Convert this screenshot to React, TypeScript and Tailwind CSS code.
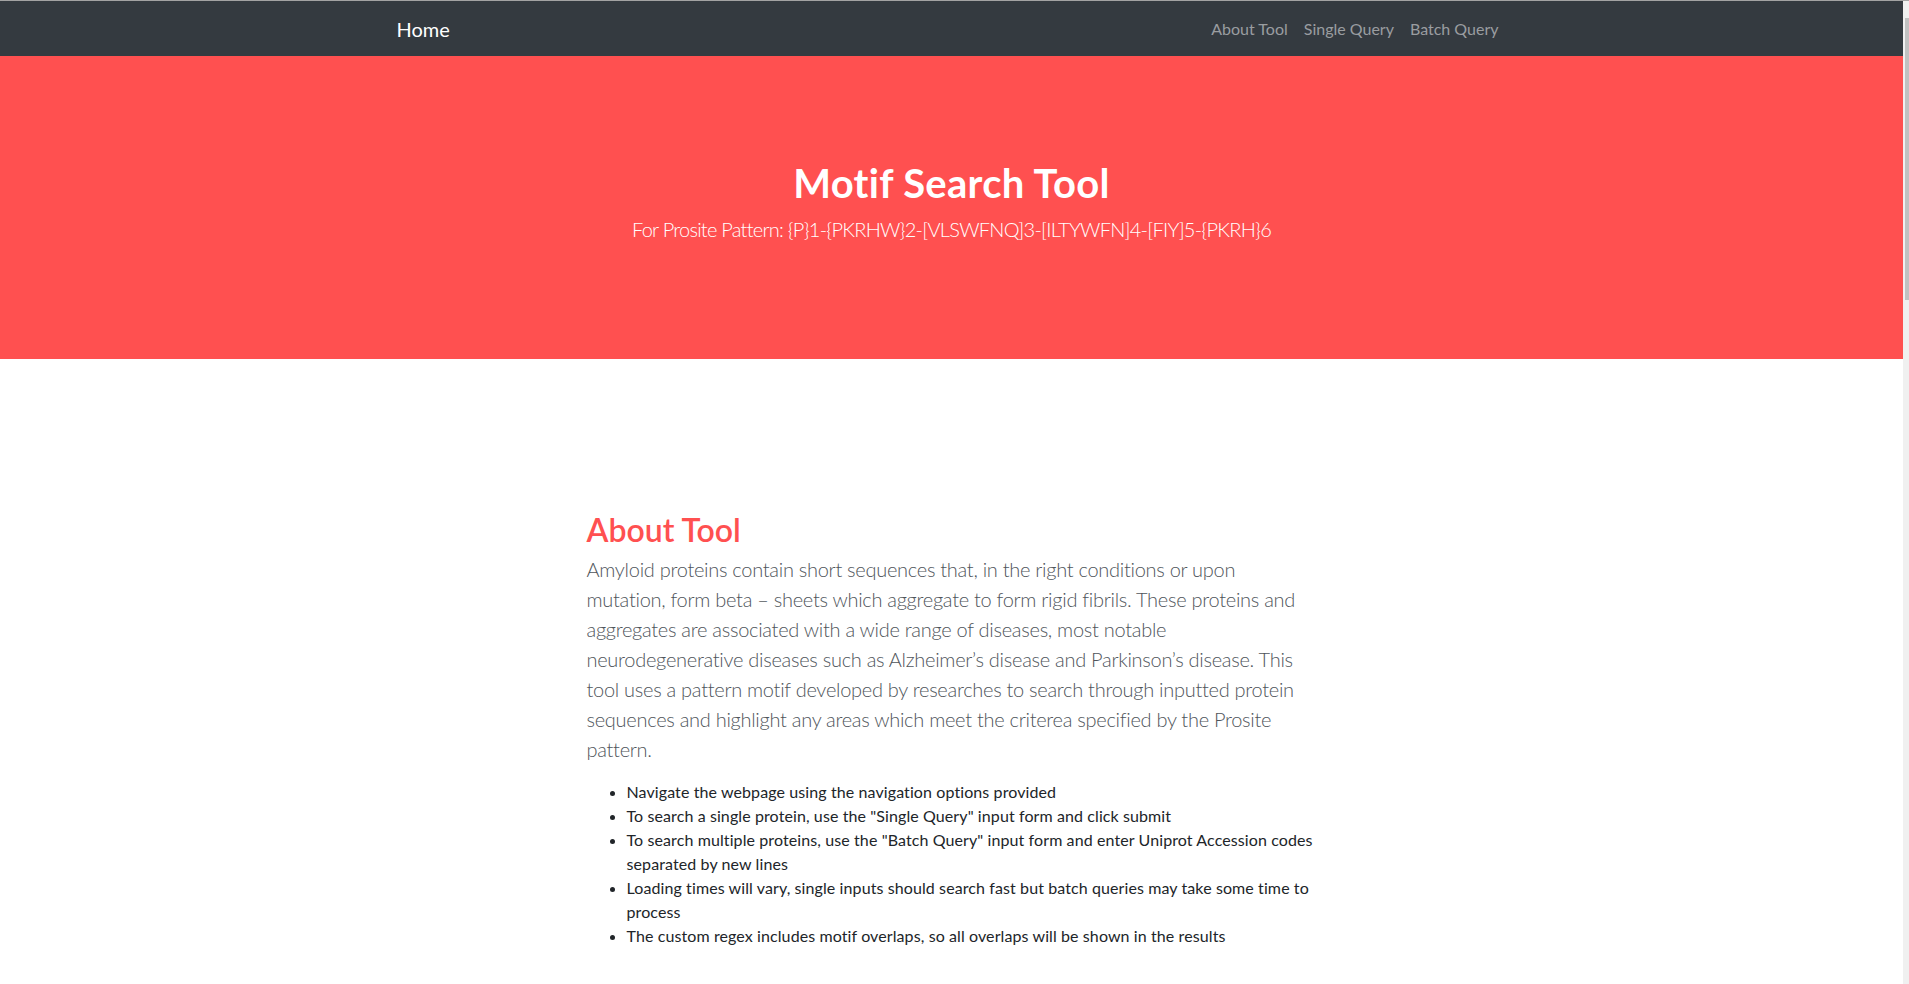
const navLinks = ["About Tool", "Single Query", "Batch Query"];

const tips = [
  "Navigate the webpage using the navigation options provided",
  'To search a single protein, use the "Single Query" input form and click submit',
  'To search multiple proteins, use the "Batch Query" input form and enter Uniprot Accession codes separated by new lines',
  "Loading times will vary, single inputs should search fast but batch queries may take some time to process",
  "The custom regex includes motif overlaps, so all overlaps will be shown in the results",
];

export default function App() {
  return (
    <div className="flex h-screen w-full overflow-hidden border-t border-[#a3a3a3] bg-white font-['Segoe_UI',Lato,'Liberation_Sans',sans-serif]">
      <div className="flex-1 min-w-0">
        {/* Navbar */}
        <nav className="h-[55px] bg-[#343a40]">
          <div className="mx-auto flex h-full w-[1140px] items-center justify-between px-[15px]">
            <a className="text-[20px] leading-[30px] text-white">Home</a>
            <ul className="flex">
              {navLinks.map((l) => (
                <li key={l}>
                  <a className="px-2 text-[16px] text-[#9a9da0]">{l}</a>
                </li>
              ))}
            </ul>
          </div>
        </nav>

        {/* Hero */}
        <header className="h-[303px] bg-[#ff5050] pt-[103px] text-center text-white">
          <h1 className="text-[40px] font-bold leading-[48px] tracking-[0.3px]">Motif Search Tool</h1>
          <p className="mt-[7px] text-[20px] font-light leading-[30px] tracking-[-0.75px]">
            For Prosite Pattern: {"{P}"}1-{"{PKRHW}"}2-[VLSWFNQ]3-[ILTYWFN]4-[FIY]5-{"{PKRH}"}6
          </p>
        </header>

        {/* About */}
        <section className="pt-[152px]">
          <div className="mx-auto w-[730px]">
            <h2 className="mb-[5px] text-[32px] font-semibold leading-[38px] text-[#ff5050]">About Tool</h2>
            <p className="mb-4 text-[20px] font-light leading-[30px] tracking-[-0.28px] text-[#4f555b]">
              Amyloid proteins contain short sequences that, in the right conditions or upon mutation,
              form beta – sheets which aggregate to form rigid fibrils. These proteins and aggregates are
              associated with a wide range of diseases, most notable neurodegenerative diseases such as
              Alzheimer’s disease and Parkinson’s disease. This tool uses a pattern motif developed by
              researches to search through inputted protein sequences and highlight any areas which meet
              the criterea specified by the Prosite pattern.
            </p>
            <ul className="list-disc pl-10 text-[16px] leading-6 tracking-[0.1px] text-[#212529]">
              {tips.map((t) => (
                <li key={t}>{t}</li>
              ))}
            </ul>
          </div>
        </section>
      </div>

      {/* Scrollbar */}
      <div className="flex w-[6px] shrink-0 flex-col bg-[#f0f0f0] pt-[17px]">
        <div className="ml-[2px] h-[282px] bg-[#c1c1c1]" />
      </div>
    </div>
  );
}
